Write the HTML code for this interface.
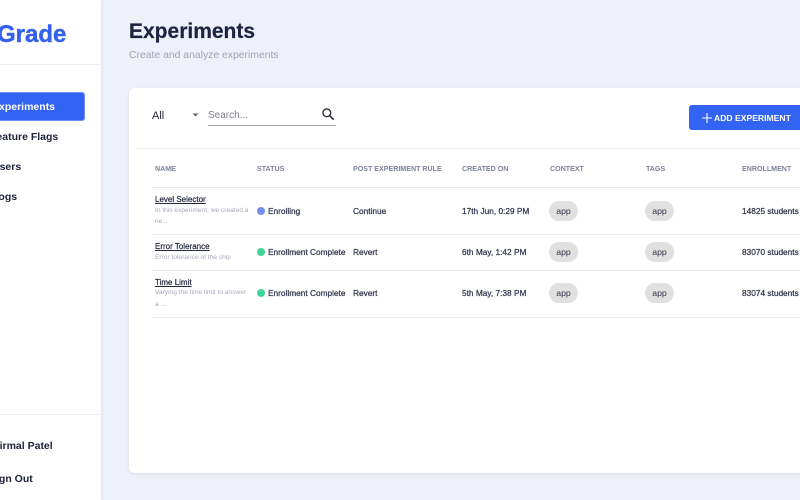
<!DOCTYPE html>
<html><head><meta charset="utf-8"><style>
html,body{margin:0;padding:0;width:800px;height:500px;overflow:hidden;background:#eef1f9}
body{position:relative;font-family:"Liberation Sans",sans-serif;color:#1f2440}
#r{position:absolute;left:0;top:0;width:800px;height:500px;overflow:hidden;filter:blur(.3px)}
.a{position:absolute;white-space:nowrap}
.t{position:absolute;white-space:nowrap;line-height:14px;height:14px}
.h{font-size:7.1px;font-weight:bold;color:#7c8298;top:162px}
.b{font-size:8.3px;color:#33374e;-webkit-text-stroke:.25px #33374e}
.n{font-size:8px;color:#23273f;text-decoration:underline;-webkit-text-stroke:.2px #23273f}
.d{font-size:6.6px;color:#a6aaba;line-height:12px;height:12px}
.l{position:absolute;height:1px;background:#e9eaee}
.dot{position:absolute;width:8px;height:8px;border-radius:50%}
.p{position:absolute;width:29px;height:20px;border-radius:10px;background:#e0e0e0;font-size:8.7px;line-height:20px;text-align:center;color:#30334a}
.m{position:absolute;font-size:10.5px;font-weight:bold;color:#1c2038;line-height:14px;white-space:nowrap}
</style></head><body><div id="r">
<div class="a" style="left:0;top:0;width:101px;height:500px;background:#fff;box-shadow:1px 0 3px rgba(40,50,90,.08)"></div>
<div class="a" style="left:0;top:64px;width:100px;height:1px;background:#f0f1f5"></div>
<div class="a" style="left:0;top:414px;width:100px;height:1px;background:#eceef3"></div>
<div class="a" style="left:-3px;top:21px;font-size:24px;line-height:28px;font-weight:bold;color:#3361f0;-webkit-text-stroke:.4px #3361f0">Grade</div>
<div class="a" style="left:-10px;top:92px;width:95px;height:29px;background:#3263f2;border-radius:3px;border:.5px solid #6e8ff6;box-sizing:border-box"></div>
<div class="m" style="left:-8px;top:100px;color:#fff">Experiments</div>
<div class="m" style="left:-10px;top:130px">Feature Flags</div>
<div class="m" style="left:-8px;top:160px">Users</div>
<div class="m" style="left:-8px;top:190px">Logs</div>
<div class="m" style="left:-8px;top:439px">Nirmal Patel</div>
<div class="m" style="left:-11px;top:472px">Sign Out</div>

<div class="a" style="left:129px;top:18px;font-size:21px;line-height:28px;font-weight:bold;color:#1d2340;-webkit-text-stroke:.2px #1d2340">Experiments</div>
<div class="a" style="left:129px;top:49px;font-size:10.4px;line-height:14px;color:#a0a4b4">Create and analyze experiments</div>

<div class="a" style="left:129px;top:88px;width:690px;height:385px;background:#fff;border-radius:5px;box-shadow:0 1px 3px rgba(40,50,90,.1)"></div>
<div class="a" style="left:152px;top:109px;font-size:11px;line-height:14px;color:#22253a">All</div>
<svg class="a" style="left:191px;top:112px" width="10" height="6"><path d="M1.5 1.5h6l-3 3z" fill="#666"/></svg>
<div class="a" style="left:208px;top:109px;font-size:10px;line-height:14px;color:#7d7f88">Search...</div>
<div class="a" style="left:208px;top:125px;width:128px;height:1px;background:#a9a9ad"></div>
<svg class="a" style="left:320px;top:106px" width="16" height="16" viewBox="0 0 16 16"><circle cx="6.8" cy="6.8" r="3.9" fill="none" stroke="#2b2d3a" stroke-width="1.4"/><path d="M9.7 9.7l4 4" stroke="#2b2d3a" stroke-width="1.6"/></svg>
<div class="a" style="left:689px;top:105px;width:120px;height:25px;background:#3263f2;border-radius:3px"></div>
<svg class="a" style="left:701px;top:112px" width="12" height="12"><path d="M6 1v10M1 6h10" stroke="#fff" stroke-width="1.1"/></svg>
<div class="a" style="left:714px;top:111px;font-size:8.6px;line-height:14px;font-weight:bold;color:#fff">ADD EXPERIMENT</div>

<div class="a" style="left:135px;top:148px;width:665px;height:1px;background:#f0f1f3"></div>
<div class="t h" style="left:155px">NAME</div>
<div class="t h" style="left:257px">STATUS</div>
<div class="t h" style="left:353px">POST EXPERIMENT RULE</div>
<div class="t h" style="left:462px">CREATED ON</div>
<div class="t h" style="left:550px">CONTEXT</div>
<div class="t h" style="left:646px">TAGS</div>
<div class="t h" style="left:742px">ENROLLMENT</div>
<div class="l" style="left:152px;top:187px;width:648px"></div>

<div class="t n" style="left:155px;top:193px">Level Selector</div>
<div class="t d" style="left:155px;top:205px">In this experiment, we created a</div>
<div class="t d" style="left:155px;top:216px">ne...</div>
<div class="dot" style="left:257px;top:207px;background:#7490ec"></div>
<div class="t b" style="left:268px;top:204px">Enrolling</div>
<div class="t b" style="left:353px;top:204px">Continue</div>
<div class="t b" style="left:462px;top:204px">17th Jun, 0:29 PM</div>
<div class="p" style="left:549px;top:201px">app</div>
<div class="p" style="left:645px;top:201px">app</div>
<div class="t b" style="left:742px;top:204px">14825 students</div>
<div class="l" style="left:152px;top:234px;width:648px"></div>

<div class="t n" style="left:155px;top:240px">Error Tolerance</div>
<div class="t d" style="left:155px;top:252px">Error tolerance of the ship</div>
<div class="dot" style="left:257px;top:248px;background:#3ed598"></div>
<div class="t b" style="left:268px;top:245px">Enrollment Complete</div>
<div class="t b" style="left:353px;top:245px">Revert</div>
<div class="t b" style="left:462px;top:245px">6th May, 1:42 PM</div>
<div class="p" style="left:549px;top:242px">app</div>
<div class="p" style="left:645px;top:242px">app</div>
<div class="t b" style="left:742px;top:245px">83070 students</div>
<div class="l" style="left:152px;top:270px;width:648px"></div>

<div class="t n" style="left:155px;top:276px">Time Limit</div>
<div class="t d" style="left:155px;top:287px">Varying the time limit to answer</div>
<div class="t d" style="left:155px;top:299px">a ...</div>
<div class="dot" style="left:257px;top:289px;background:#3ed598"></div>
<div class="t b" style="left:268px;top:286px">Enrollment Complete</div>
<div class="t b" style="left:353px;top:286px">Revert</div>
<div class="t b" style="left:462px;top:286px">5th May, 7:38 PM</div>
<div class="p" style="left:549px;top:283px">app</div>
<div class="p" style="left:645px;top:283px">app</div>
<div class="t b" style="left:742px;top:286px">83074 students</div>
<div class="l" style="left:152px;top:317px;width:648px"></div>
</div></body></html>
